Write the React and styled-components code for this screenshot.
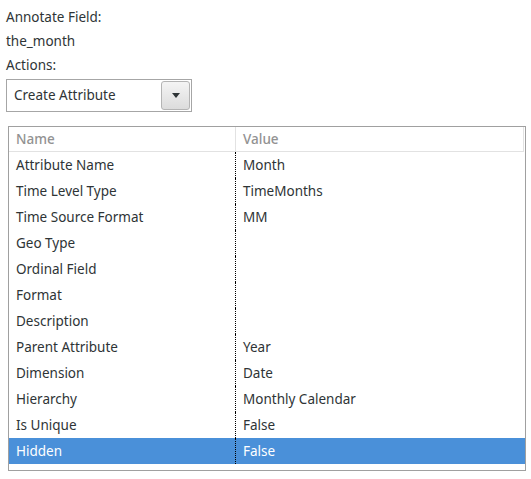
import React from "react";
import styled, { createGlobalStyle } from "styled-components";

const GlobalStyle = createGlobalStyle`
  body {
    margin: 0;
    background: #ffffff;
    font-family: "Noto Sans", "DejaVu Sans", sans-serif;
    font-size: 13.5px;
    color: #2e3436;
  }
`;

const Page = styled.div`
  padding: 5px 6px 9px 6px;
  display: flex;
  flex-direction: column;
`;

const Label = styled.div`
  height: 24px;
  line-height: 24px;
`;

const Combo = styled.div`
  margin-top: 2px;
  width: 186px;
  height: 33px;
  box-sizing: border-box;
  border: 1px solid #a6a6a6;
  background: #fff;
  display: flex;
  align-items: center;
  justify-content: space-between;
  padding: 0 1px 1px 7px;
`;

const ComboButton = styled.div`
  width: 29px;
  height: 29px;
  margin-top: 1px;
  box-sizing: border-box;
  border: 1px solid #b4b4b4;
  border-radius: 3px;
  background: linear-gradient(#f4f4f4, #dcdcdc);
  display: flex;
  align-items: center;
  justify-content: center;
`;

const Arrow = styled.div`
  width: 0;
  height: 0;
  border-left: 4px solid transparent;
  border-right: 4px solid transparent;
  border-top: 5px solid #2e3436;
`;

const Table = styled.div`
  margin: 14px 0 0 2px;
  width: 518px;
  height: 345px;
  box-sizing: border-box;
  border: 1px solid #a0a0a0;
  background: #fff;
`;

const Row = styled.div`
  display: grid;
  grid-template-columns: 227px 1fr;
  height: ${(p) => (p.$header ? "24px" : "26px")};
  line-height: ${(p) => (p.$header ? "24px" : "26px")};
  background: ${(p) => (p.$selected ? "#4a90d9" : "transparent")};
  color: ${(p) => (p.$selected ? "#ffffff" : p.$header ? "#929292" : "#2e3436")};
  border-bottom: ${(p) => (p.$header ? "1px solid #e2e2e2" : "none")};
  margin-right: ${(p) => (p.$header ? "1px" : "0")};
  font-weight: ${(p) => (p.$header ? 500 : 400)};
`;

const Cell = styled.div`
  padding-left: 7px;
  white-space: nowrap;
  overflow: hidden;
  border-right: ${(p) => p.$divider || "none"};
`;

const rows = [
  ["Attribute Name", "Month"],
  ["Time Level Type", "TimeMonths"],
  ["Time Source Format", "MM"],
  ["Geo Type", ""],
  ["Ordinal Field", ""],
  ["Format", ""],
  ["Description", ""],
  ["Parent Attribute", "Year"],
  ["Dimension", "Date"],
  ["Hierarchy", "Monthly Calendar"],
  ["Is Unique", "False"],
  ["Hidden", "False"],
];

export default function App() {
  return (
    <>
      <GlobalStyle />
      <Page>
        <Label>Annotate Field:</Label>
        <Label>the_month</Label>
        <Label>Actions:</Label>
        <Combo>
          <span>Create Attribute</span>
          <ComboButton>
            <Arrow />
          </ComboButton>
        </Combo>
        <Table>
          <Row $header>
            <Cell $divider="1px solid #e2e2e2">Name</Cell>
            <Cell $divider="1px solid #e2e2e2">Value</Cell>
          </Row>
          {rows.map(([name, value], i) => (
            <Row key={name} $selected={i === rows.length - 1}>
              <Cell $divider="1px dotted #000">{name}</Cell>
              <Cell>{value}</Cell>
            </Row>
          ))}
        </Table>
      </Page>
    </>
  );
}
